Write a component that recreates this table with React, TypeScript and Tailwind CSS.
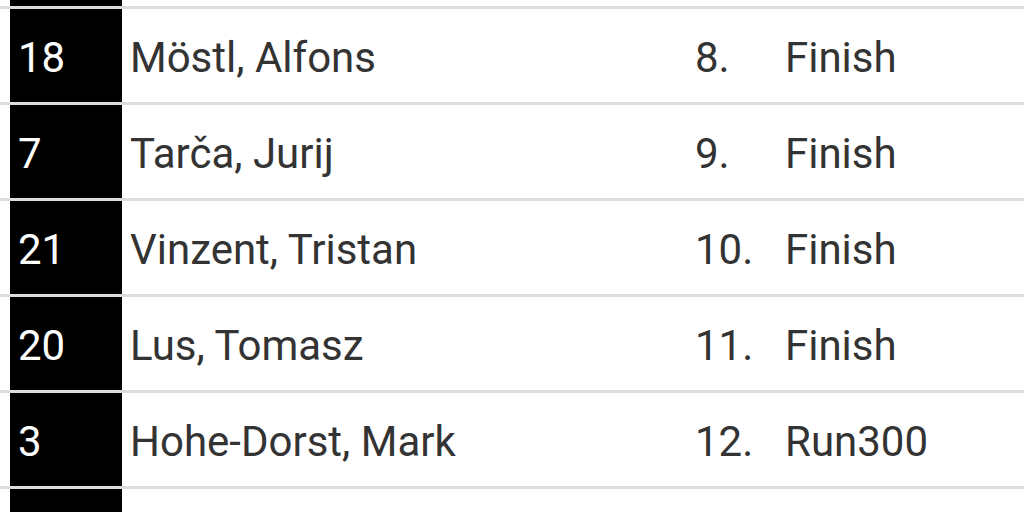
import React from 'react';

interface Result {
  bib: number;
  name: string;
  rank: string;
  status: string;
}

const results: Result[] = [
  { bib: 18, name: 'Möstl, Alfons', rank: '8.', status: 'Finish' },
  { bib: 7, name: 'Tarča, Jurij', rank: '9.', status: 'Finish' },
  { bib: 21, name: 'Vinzent, Tristan', rank: '10.', status: 'Finish' },
  { bib: 20, name: 'Lus, Tomasz', rank: '11.', status: 'Finish' },
  { bib: 3, name: 'Hohe-Dorst, Mark', rank: '12.', status: 'Run300' },
];

export default function App() {
  return (
    <div
      className="w-[1024px] h-[512px] overflow-hidden bg-white text-[#333333]"
      style={{ fontFamily: 'Roboto, "Noto Sans", sans-serif' }}
    >
      {/* tail of previous row */}
      <div className="flex h-[9px] border-b-[3px] border-[#dddddd]">
        <div className="ml-[10px] w-[112px] bg-black" />
      </div>

      {results.map(r => (
        <div key={r.bib} className="flex h-[96px] border-b-[3px] border-[#dddddd] text-[42px] leading-none">
          <div className="ml-[10px] w-[112px] bg-black text-white flex items-center pl-[8px] pt-[5px]">{r.bib}</div>
          <div className="flex-1 flex items-center pl-[8px] pt-[5px]">{r.name}</div>
          <div className="w-[90px] flex items-center pt-[5px]">{r.rank}</div>
          <div className="w-[239px] flex items-center pt-[5px]">{r.status}</div>
        </div>
      ))}

      <div className="flex h-[40px]">
        <div className="ml-[10px] w-[112px] bg-black" />
      </div>
    </div>
  );
}
